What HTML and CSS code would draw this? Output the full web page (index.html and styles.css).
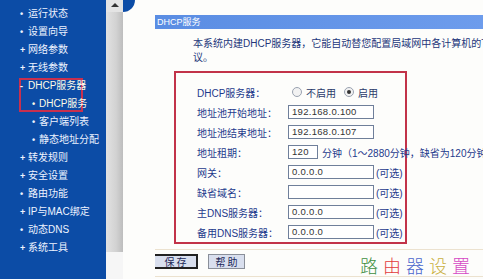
FILE: index.html
```
<!DOCTYPE html>
<html lang="zh-CN">
<head>
    <meta charset="UTF-8">
    <title>DHCP服务</title>
    <link rel="stylesheet" href="styles.css">
</head>
<body>

<div class="sidebar">
    <div class="nav dot">运行状态</div>
    <div class="nav dot">设置向导</div>
    <div class="nav plus">网络参数</div>
    <div class="nav plus">无线参数</div>
    <div class="nav-mark">
        <div class="nav minus">DHCP服务器</div>
        <div class="nav sub">DHCP服务</div>
    </div>
    <div class="nav sub">客户端列表</div>
    <div class="nav sub">静态地址分配</div>
    <div class="nav plus">转发规则</div>
    <div class="nav plus">安全设置</div>
    <div class="nav dot">路由功能</div>
    <div class="nav plus">IP与MAC绑定</div>
    <div class="nav dot">动态DNS</div>
    <div class="nav plus">系统工具</div>
</div>

<div class="scroll">
    <div class="scroll-up"></div>
    <div class="scroll-thumb"></div>
</div>

<div class="gutter"><div class="corner"></div></div>

<div class="main">
    <div class="title-bar">DHCP服务</div>
    <p class="desc">本系统内建DHCP服务器，它能自动替您配置局域网中各计算机的TCP/IP协<br>议。</p>

    <div class="form-box">
        <div class="row">
            <span class="label">DHCP服务器：</span>
            <span class="radio"></span><span class="opt">不启用</span>
            <span class="radio on"></span><span class="opt">启用</span>
        </div>
        <div class="row">
            <span class="label">地址池开始地址：</span>
            <span class="field">192.168.0.100</span>
        </div>
        <div class="row">
            <span class="label">地址池结束地址：</span>
            <span class="field">192.168.0.107</span>
        </div>
        <div class="row">
            <span class="label">地址租期：</span>
            <span class="field short">120</span>
            <span class="note">分钟（1～2880分钟，缺省为120分钟）</span>
        </div>
        <div class="row">
            <span class="label">网关：</span>
            <span class="field">0.0.0.0</span>
            <span class="note">(可选)</span>
        </div>
        <div class="row">
            <span class="label">缺省域名：</span>
            <span class="field"></span>
            <span class="note">(可选)</span>
        </div>
        <div class="row">
            <span class="label">主DNS服务器：</span>
            <span class="field">0.0.0.0</span>
            <span class="note">(可选)</span>
        </div>
        <div class="row">
            <span class="label">备用DNS服务器：</span>
            <span class="field">0.0.0.0</span>
            <span class="note">(可选)</span>
        </div>
    </div>

    <div class="actions">
        <button class="btn strong">保 存</button>
        <button class="btn">帮 助</button>
    </div>
</div>

<!-- watermark over the corner -->
<div class="watermark"><span class="c1">路</span><span class="c2">由</span><span class="c3">器</span><span class="c4">设</span><span class="c5">置</span></div>

</body>
</html>
```
FILE: styles.css
```
body {
    margin: 0;
    width: 483px;
    height: 279px;
    overflow: hidden;
    display: flex;
    background-color: #fdfdfb;
    font-family: "Liberation Sans", "Noto Sans CJK SC", sans-serif;
    position: relative;
}

.sidebar {
    width: 106px;
    flex: none;
    background-color: #0c4ca6;
    padding-top: 5px;
    color: #eef3ff;
    font-size: 10px;
}

.nav {
    height: 18px;
    line-height: 18px;
    padding-left: 28px;
    position: relative;
    white-space: nowrap;
}

.nav::before {
    position: absolute;
    left: 20px;
    top: 0;
    font-size: 9px;
    font-weight: bold;
}

.dot::before { content: "•"; }
.plus::before { content: "+"; }
.minus::before { content: "-"; }

.sub {
    padding-left: 39px;
}

.sub::before {
    content: "•";
    left: 32px;
}

.nav-mark {
    outline: 2px solid #c8304e;
    outline-offset: -3px;
    margin-left: 18px;
    width: 66px;
}

.nav-mark .nav {
    padding-left: 10px;
    color: #fffbe6;
}

.nav-mark .nav::before {
    left: 2px;
}

.nav-mark .sub {
    padding-left: 21px;
}

.nav-mark .sub::before {
    left: 14px;
}

.scroll {
    width: 17px;
    flex: none;
    background-color: #f6f6f6;
    display: flex;
    flex-direction: column;
}

.scroll-up {
    height: 12px;
    background-color: #e4e4e4;
    position: relative;
}

.scroll-up::after {
    content: "";
    position: absolute;
    left: 5px;
    top: 3px;
    border-left: 4px solid transparent;
    border-right: 4px solid transparent;
    border-bottom: 4px solid #333;
}

.scroll-thumb {
    height: 240px;
    background: linear-gradient(to right, #e2e2e2, #d2d2d2 60%, #bdbdbd);
}

.gutter {
    width: 32px;
    flex: none;
}

.corner {
    width: 12px;
    height: 12px;
    background-color: #0c4ca6;
    border-bottom-right-radius: 12px 12px;
}

.main {
    flex: 1;
    min-width: 0;
    padding-top: 15px;
    overflow: hidden;
    color: #1d3a8c;
}

.title-bar {
    height: 14px;
    line-height: 14px;
    background: linear-gradient(to right, #5a8de3, #6d9cec);
    color: #ffffff;
    font-size: 9px;
    padding-left: 2px;
}

.desc {
    margin: 8px 0 0 38px;
    font-size: 10px;
    line-height: 14px;
    white-space: nowrap;
    color: #23367a;
}

.form-box {
    margin: 6px 0 0 19px;
    width: 229px;
    height: 160px;
    border: 2px solid #c23349;
    padding-top: 9px;
}

.row {
    display: flex;
    align-items: center;
    height: 20px;
    padding-left: 21px;
    font-size: 10px;
    white-space: nowrap;
}

.label {
    width: 91px;
    flex: none;
}

.field {
    width: 81px;
    height: 12px;
    line-height: 12px;
    flex: none;
    border: 1px solid #6f7f9a;
    background-color: #ffffff;
    color: #333;
    font-size: 9.5px;
    padding-left: 3px;
    box-sizing: content-box;
    letter-spacing: 0.3px;
}

.field.short {
    width: 25px;
}

.note {
    margin-left: 2px;
}

.field.short + .note {
    margin-left: 4px;
}

.radio {
    width: 8px;
    height: 8px;
    border: 1px solid #9aa2b0;
    border-radius: 50%;
    background-color: #f2f2f2;
    margin: 0 4px 0 4px;
    position: relative;
}

.radio.on::after {
    content: "";
    position: absolute;
    left: 2px;
    top: 2px;
    width: 4px;
    height: 4px;
    border-radius: 50%;
    background-color: #333;
}

.opt {
    margin-right: 4px;
    color: #2a3a6a;
}

.actions {
    margin-top: 5px;
    border-top: 1px solid #ece2cf;
    border-bottom: 1px solid #ece2cf;
    padding: 4px 0 7px 0;
    display: flex;
    gap: 10px;
    margin-left: -2px;
}

.btn {
    font-family: "Noto Sans CJK SC", sans-serif;
    font-size: 10px;
    line-height: 11px;
    height: 15px;
    width: 37px;
    padding: 0;
    background-color: #d9dfee;
    color: #1d2a5a;
    border: 1px solid #8a8f99;
}

.btn.strong {
    border: 2px solid #222;
    width: 45px;
}

.watermark {
    position: absolute;
    left: 360px;
    top: 255px;
    font-family: "Noto Sans CJK SC", serif;
    font-size: 18px;
    font-weight: 300;
    letter-spacing: 5px;
    line-height: 20px;
}

.c1 { color: #3f8f3f; }
.c2 { color: #e23a3a; }
.c3 { color: #4a66cc; }
.c4 { color: #c9b040; }
.c5 { color: #d548c4; }
```
